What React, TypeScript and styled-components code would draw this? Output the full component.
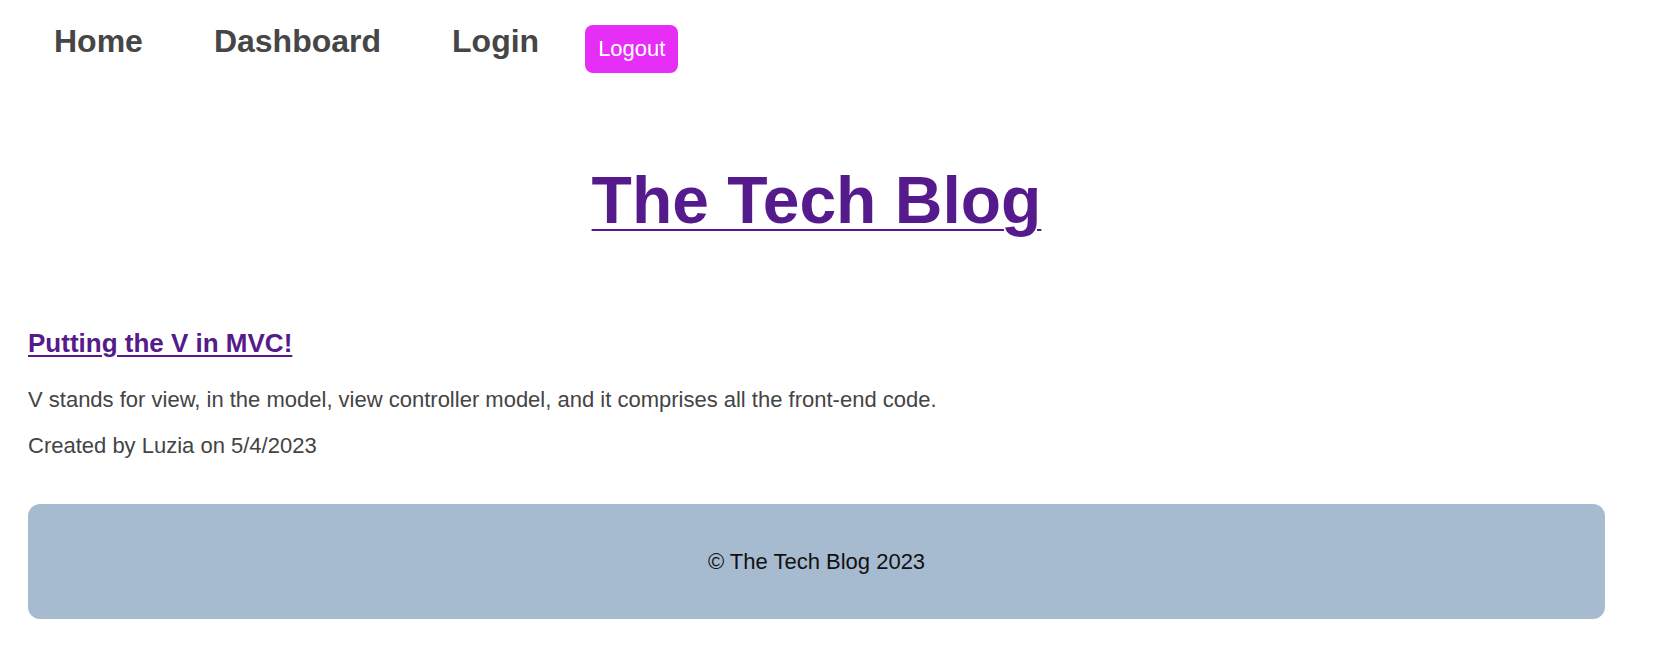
import React from "react";
import styled, { createGlobalStyle } from "styled-components";

const GlobalStyle = createGlobalStyle`
  html, body {
    margin: 0;
    padding: 0;
    background: #ffffff;
  }
  body {
    font-family: "Liberation Sans", Arial, Helvetica, sans-serif;
  }
`;

const Page = styled.div`
  display: flex;
  flex-direction: column;
  padding: 0 57px 0 28px;
`;

const Nav = styled.nav`
  display: flex;
  align-items: flex-start;
  gap: 71px;
  padding: 21px 0 0 26px;
`;

const NavLink = styled.a`
  font-size: 32px;
  line-height: 40px;
  font-weight: 700;
  color: #464646;
  text-decoration: none;
  cursor: pointer;
`;

const LogoutButton = styled.button`
  margin: 4px 0 0 -25px;
  height: 48px;
  padding: 0 13px;
  border: none;
  border-radius: 8px;
  background: #e62ef6;
  color: #ffffff;
  font-family: inherit;
  font-size: 22px;
  line-height: 48px;
  cursor: pointer;
`;

const TitleBlock = styled.header`
  display: flex;
  justify-content: center;
  margin-top: 87px;
`;

const SiteTitle = styled.a`
  font-size: 66px;
  line-height: 80px;
  font-weight: 700;
  color: #551a8b;
  text-decoration: underline;
  text-decoration-thickness: 2px;
  text-underline-offset: 6px;
`;

const Main = styled.main`
  display: flex;
  flex-direction: column;
  margin-top: 87px;
`;

const PostTitle = styled.a`
  align-self: flex-start;
  font-size: 26px;
  line-height: 32px;
  font-weight: 700;
  color: #551a8b;
  text-decoration: underline;
  text-decoration-thickness: 2px;
  text-underline-offset: 3px;
`;

const PostText = styled.p<{ $gap: number }>`
  margin: ${(p) => p.$gap}px 0 0;
  font-size: 22px;
  line-height: 28px;
  color: #444444;
`;

const Footer = styled.footer`
  display: flex;
  align-items: center;
  justify-content: center;
  height: 115px;
  margin-top: 44px;
  border-radius: 12px;
  background: #a7bbd0;
  color: #111111;
  font-size: 22px;
  line-height: 28px;
`;

export default function App() {
  return (
    <>
      <GlobalStyle />
      <Page>
        <Nav>
          <NavLink>Home</NavLink>
          <NavLink>Dashboard</NavLink>
          <NavLink>Login</NavLink>
          <LogoutButton>Logout</LogoutButton>
        </Nav>
        <TitleBlock>
          <SiteTitle>The Tech Blog</SiteTitle>
        </TitleBlock>
        <Main>
          <PostTitle>Putting the V in MVC!</PostTitle>
          <PostText $gap={27}>
            V stands for view, in the model, view controller model, and it comprises all the front-end code.
          </PostText>
          <PostText $gap={18}>Created by Luzia on 5/4/2023</PostText>
        </Main>
        <Footer>© The Tech Blog 2023</Footer>
      </Page>
    </>
  );
}
